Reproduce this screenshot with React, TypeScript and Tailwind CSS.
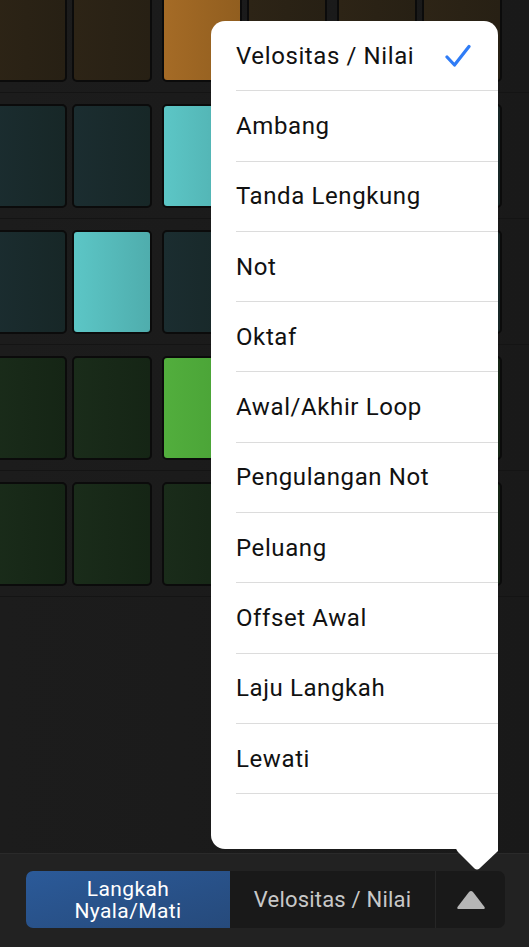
import React from 'react';

type PadColor = 'brown' | 'teal' | 'green';

const padStyles: Record<PadColor, { off: string; on: string }> = {
    brown: {
        off: 'bg-gradient-to-r from-[#2d2416] to-[#272014]',
        on: 'bg-gradient-to-r from-[#a56b26] to-[#915e1f]',
    },
    teal: {
        off: 'bg-gradient-to-r from-[#1b2d30] to-[#172727]',
        on: 'bg-gradient-to-r from-[#5cc6c6] to-[#4fadad]',
    },
    green: {
        off: 'bg-gradient-to-r from-[#1a2c1a] to-[#152515]',
        on: 'bg-gradient-to-r from-[#52ae3d] to-[#48a035]',
    },
};

// which pads are lit, per row
const rows: { color: PadColor; active: number[] }[] = [
    { color: 'brown', active: [2] },
    { color: 'teal', active: [2] },
    { color: 'teal', active: [1] },
    { color: 'green', active: [2] },
    { color: 'green', active: [] },
];

const menuItems = [
    'Velositas / Nilai',
    'Ambang',
    'Tanda Lengkung',
    'Not',
    'Oktaf',
    'Awal/Akhir Loop',
    'Pengulangan Not',
    'Peluang',
    'Offset Awal',
    'Laju Langkah',
    'Lewati',
];

const Pad: React.FC<{ color: PadColor; on: boolean }> = ({ color, on }) => (
    <div
        className={`w-[80px] h-[104px] shrink-0 rounded-[5px] border-2 border-[#0b0b0b] ${on ? padStyles[color].on : padStyles[color].off}`}
    />
);

const StepRow: React.FC<{ color: PadColor; active: number[] }> = ({ color, active }) => (
    <div className="pt-[11px] pb-[10px] border-b border-[#141414] flex gap-[10px] ml-[-13px]">
        {[0, 1, 2].map(pair => (
            <div key={pair} className="flex gap-[5px]">
                <Pad color={color} on={active.includes(pair * 2)} />
                <Pad color={color} on={active.includes(pair * 2 + 1)} />
            </div>
        ))}
    </div>
);

const App: React.FC = () => {
    return (
        <div
            className="relative w-[529px] h-[947px] overflow-hidden bg-[#1b1b1b] flex flex-col"
            style={{ fontFamily: 'Roboto, "Liberation Sans", sans-serif' }}
        >
            {/* Step grid */}
            <div className="flex-1 overflow-hidden bg-gradient-to-r from-[#1c1c1c] to-[#191919]">
                <div className="mt-[-33px]">
                    {rows.map((row, i) => (
                        <StepRow key={i} color={row.color} active={row.active} />
                    ))}
                </div>
            </div>

            {/* Bottom toolbar */}
            <div className="h-[94px] shrink-0 bg-[#222222] border-t border-[#2a2a2a] flex items-start pt-[17px] pl-[26px]">
                <div className="flex h-[57px] rounded-[7px] overflow-hidden bg-[#191919]">
                    <div className="w-[204px] bg-gradient-to-br from-[#2b5a99] to-[#264a7b] flex flex-col items-center justify-center text-center text-white text-[21px] leading-[22px] tracking-[0.4px]">
                        <span>Langkah</span>
                        <span>Nyala/Mati</span>
                    </div>
                    <div className="w-[206px] flex items-center justify-center text-[#c8c8c8] text-[22px] tracking-[0.2px] border-r border-[#262626]">
                        Velositas / Nilai
                    </div>
                    <div className="w-[69px] flex items-center justify-center">
                        <svg width="30" height="20" viewBox="0 0 30 20">
                            <path d="M13 2 Q15 0 17 2 L28.5 17 Q29.5 19 27 19 L3 19 Q0.5 19 1.5 17 Z" fill="#b6b6b6" />
                        </svg>
                    </div>
                </div>
            </div>

            {/* Popover menu */}
            <div className="absolute left-[211px] top-[21px] w-[287px] h-[828px] bg-white rounded-[14px] rounded-br-none">
                {menuItems.map((item, i) => (
                    <div key={item} className="ml-[25px] h-[70.3px] border-b border-[#dcdcdc] flex items-center justify-between pr-[27px]">
                        <span className="text-[24px] text-[#111111] tracking-[0.6px]">{item}</span>
                        {i === 0 && (
                            <svg width="26" height="24" viewBox="0 0 26 24" fill="none">
                                <path d="M2 13 L9.5 21 L24 2.5" stroke="#2f7cf6" strokeWidth="3.2" strokeLinecap="round" strokeLinejoin="round" />
                            </svg>
                        )}
                    </div>
                ))}
            </div>
            <svg className="absolute left-[456px] top-[848px]" width="42" height="23" viewBox="0 0 42 23">
                <path d="M0 0 L42 0 L42 3 L23.5 20.5 Q21 22.5 18.5 20.5 L2 4 Q0 1.5 0 0 Z" fill="#ffffff" />
            </svg>
        </div>
    );
};

export default App;
